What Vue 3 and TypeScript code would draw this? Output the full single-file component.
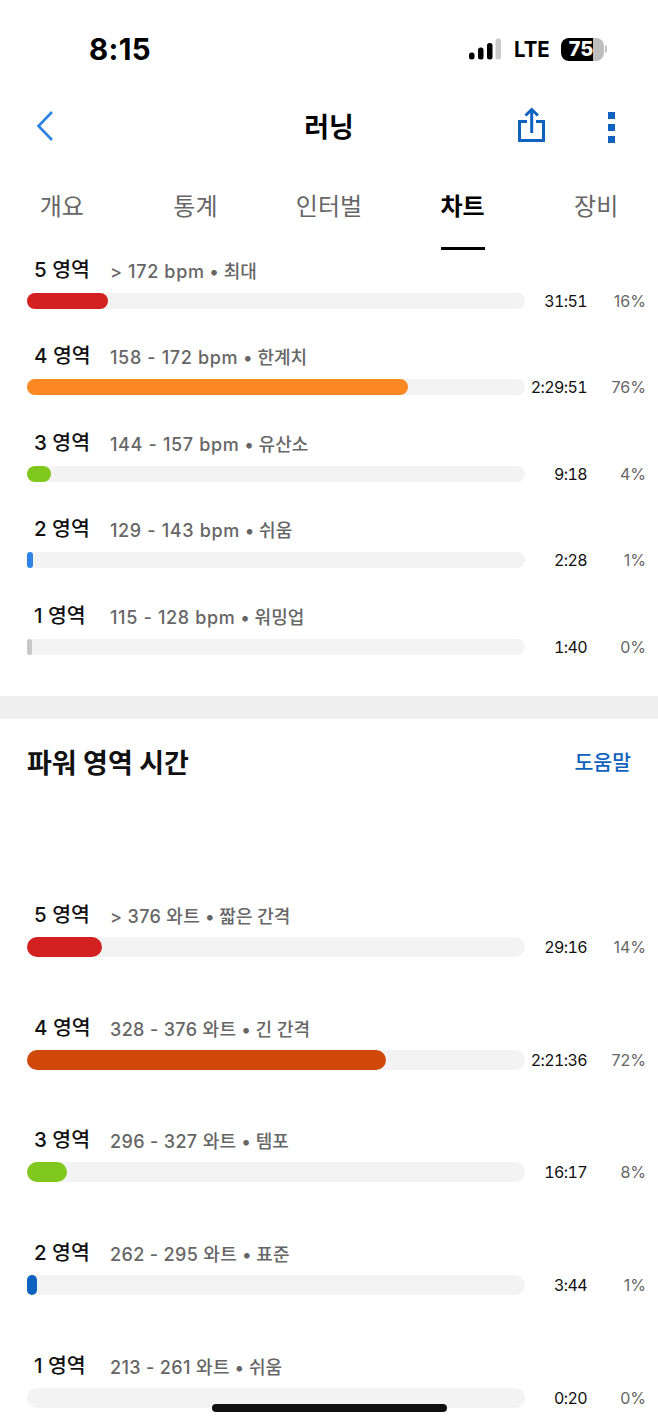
<script setup lang="ts">
interface Zone { n: number; range: string; name: string; time: string; pct: string; color: string; width: number }
const tabs: string[] = ['개요', '통계', '인터벌', '차트', '장비']
const hr: Zone[] = [
  { n: 5, range: '> 172 bpm', name: '최대', time: '31:51', pct: '16%', color: '#d32020', width: 81 },
  { n: 4, range: '158 - 172 bpm', name: '한계치', time: '2:29:51', pct: '76%', color: '#fb8823', width: 381 },
  { n: 3, range: '144 - 157 bpm', name: '유산소', time: '9:18', pct: '4%', color: '#80c81e', width: 24 },
  { n: 2, range: '129 - 143 bpm', name: '쉬움', time: '2:28', pct: '1%', color: '#2f82e8', width: 6 },
  { n: 1, range: '115 - 128 bpm', name: '워밍업', time: '1:40', pct: '0%', color: '#c8c8c8', width: 5 },
]
const power: Zone[] = [
  { n: 5, range: '> 376 와트', name: '짧은 간격', time: '29:16', pct: '14%', color: '#d32020', width: 75 },
  { n: 4, range: '328 - 376 와트', name: '긴 간격', time: '2:21:36', pct: '72%', color: '#d0480a', width: 359 },
  { n: 3, range: '296 - 327 와트', name: '템포', time: '16:17', pct: '8%', color: '#80c81e', width: 40 },
  { n: 2, range: '262 - 295 와트', name: '표준', time: '3:44', pct: '1%', color: '#0f62c0', width: 10 },
  { n: 1, range: '213 - 261 와트', name: '쉬움', time: '0:20', pct: '0%', color: '#f3f3f3', width: 0 },
]
</script>

<template>
  <div class="page">
    <div class="status">
      <span class="clock">8:15</span>
      <div class="status-right">
        <svg width="32" height="22" viewBox="0 0 32 22">
          <rect x="0" y="14.5" width="5.5" height="7" rx="2.5" fill="#000" />
          <rect x="9" y="9.5" width="5.5" height="12" rx="2.5" fill="#000" />
          <rect x="18" y="5" width="5.5" height="16.5" rx="2.5" fill="#000" />
          <rect x="26.5" y="0.5" width="5.5" height="21" rx="2.5" fill="#ccc" />
        </svg>
        <span class="lte">LTE</span>
        <div class="battery"><span class="batt-num">75</span></div>
        <span class="batt-tip"></span>
      </div>
    </div>

    <div class="nav">
      <svg class="back" width="20" height="32" viewBox="0 0 20 32">
        <path d="M17 2 L3.5 16 L17 30" fill="none" stroke="#2a82e4" stroke-width="2.6" />
      </svg>
      <span class="title">러닝</span>
      <div class="nav-actions">
        <svg width="28" height="36" viewBox="0 0 28 36">
          <path d="M9 15.5 H1.5 V34.5 H25.5 V15.5 H18" fill="none" stroke="#0f62c0" stroke-width="3" />
          <path d="M13.7 27 V4" fill="none" stroke="#0f62c0" stroke-width="3" />
          <path d="M7.5 9.5 L13.7 3.5 L19.9 9.5" fill="none" stroke="#0f62c0" stroke-width="3" />
        </svg>
        <div class="dots"><i></i><i></i><i></i></div>
      </div>
    </div>

    <div class="tabs">
      <div v-for="t in tabs" :key="t" class="tab" :class="{ active: t === '차트' }">
        <span class="tab-label">{{ t }}</span>
      </div>
    </div>

    <section class="zones hr">
      <div v-for="z in hr" :key="z.n" class="zone">
        <div class="zone-head">
          <span class="zone-name">{{ z.n }} 영역</span>
          <span class="zone-sub"><span class="range">{{ z.range }}</span> • {{ z.name }}</span>
        </div>
        <div class="zone-bar">
          <div class="track"><div class="fill" :style="{ width: z.width + 'px', background: z.color }"></div></div>
          <span class="time">{{ z.time }}</span>
          <span class="pct">{{ z.pct }}</span>
        </div>
      </div>
    </section>

    <div class="band"></div>

    <div class="section-head">
      <h2>파워 영역 시간</h2>
      <span class="help">도움말</span>
    </div>

    <section class="zones power">
      <div v-for="z in power" :key="z.n" class="zone">
        <div class="zone-head">
          <span class="zone-name">{{ z.n }} 영역</span>
          <span class="zone-sub"><span class="range">{{ z.range }}</span> • {{ z.name }}</span>
        </div>
        <div class="zone-bar">
          <div class="track"><div class="fill" :style="{ width: z.width + 'px', background: z.color }"></div></div>
          <span class="time">{{ z.time }}</span>
          <span class="pct">{{ z.pct }}</span>
        </div>
      </div>
    </section>

    <div class="home"></div>
  </div>
</template>

<style>
html, body { margin: 0; background: #fff; }
</style>

<style scoped>
.page {
  position: relative;
  width: 658px;
  height: 1426px;
  overflow: hidden;
  background: #fff;
  font-family: Inter, "Noto Sans CJK KR", "Liberation Sans", sans-serif;
  color: #000;
}
.status {
  height: 98px;
  box-sizing: border-box;
  padding: 29px 51px 0 89px;
  display: flex;
  justify-content: space-between;
  align-items: flex-start;
}
.clock { font-size: 29.5px; line-height: 40px; font-weight: 700; letter-spacing: 0.3px; }
.status-right { display: flex; align-items: center; height: 40px; }
.lte { font-size: 22px; font-weight: 700; margin-left: 13px; display: inline-block; width: 35px; white-space: nowrap; transform: scaleX(0.93); transform-origin: left; }
.battery {
  margin-left: 12px;
  width: 43px;
  height: 23px;
  border-radius: 8px;
  background: linear-gradient(90deg, #000 0 75%, #bdbdbd 75% 100%);
  display: flex;
  align-items: center;
  justify-content: center;
}
.batt-num { color: #fff; font-size: 20px; font-weight: 800; line-height: 23px; margin-left: -3px; }
.batt-tip { width: 2px; height: 8px; margin-left: 1px; background: #c4c4c4; border-radius: 0 2px 2px 0; }

.nav {
  height: 56px;
  position: relative;
  display: flex;
  align-items: center;
  justify-content: center;
}
.back { position: absolute; left: 35px; top: 12px; }
.title { font-size: 27px; font-weight: 600; line-height: 56px; padding-top: 3px; }
.nav-actions { position: absolute; left: 518px; top: 8px; display: flex; align-items: flex-start; }
.dots { margin-left: 62px; padding-top: 6px; display: flex; flex-direction: column; gap: 5px; }
.dots i { display: block; width: 7px; height: 7px; background: #0f62c0; }

.tabs {
  display: grid;
  grid-template-columns: repeat(5, 1fr);
  margin: 0 -5px;
  height: 96px;
  box-sizing: border-box;
  padding-top: 31px;
}
.tab { display: flex; justify-content: center; }
.tab-label {
  font-size: 24px;
  line-height: 44px;
  height: 62px;
  color: #666;
  font-weight: 400;
  box-sizing: content-box;
}
.tab.active .tab-label {
  color: #000;
  font-weight: 700;
  border-bottom: 3px solid #000;
}

.zones { display: flex; flex-direction: column; }
.hr { height: 446px; }
.zone-head { display: flex; align-items: center; padding-left: 34px; box-sizing: border-box; }
.zone-name { width: 76px; font-size: 20.5px; font-weight: 500; color: #111; white-space: nowrap; padding-bottom: 4px; }
.zone-sub { font-size: 18px; font-weight: 500; color: #666; white-space: nowrap; }
.hr .range { letter-spacing: 0.65px; }
.power .range { letter-spacing: 0.35px; }
.zone-bar { display: flex; align-items: center; padding-left: 27px; }
.track { width: 498px; background: #f3f3f3; }
.fill { height: 100%; }
.time { width: 62px; text-align: right; font-size: 16px; line-height: 20px; color: #111; white-space: nowrap; font-variant-numeric: tabular-nums; letter-spacing: -0.6px; }
.pct { width: 59px; text-align: right; font-size: 16px; line-height: 20px; color: #666; white-space: nowrap; }

.hr .zone { height: 86.4px; flex: none; }
.hr .zone-head { height: 43px; padding-bottom: 3px; }
.hr .zone-bar { height: 16px; }
.hr .track { height: 16px; border-radius: 8px; }
.hr .fill { border-radius: 8px; }

.band { height: 23px; background: #efefef; }
.section-head {
  height: 88px;
  box-sizing: border-box;
  padding: 0 27px 4px;
  display: flex;
  align-items: center;
  justify-content: space-between;
}
.section-head h2 { margin: 0; font-size: 27px; font-weight: 700; color: #111; }
.help { font-size: 20.5px; font-weight: 500; color: #0f62c0; }

.power { margin-top: 86px; }
.power .zone { height: 112.7px; flex: none; }
.power .zone-head { height: 44px; }
.power .zone-bar { height: 20px; }
.power .track { height: 20px; border-radius: 10px; }
.power .fill { border-radius: 10px; }

.home {
  position: absolute;
  left: 212px;
  top: 1404px;
  width: 235px;
  height: 8px;
  border-radius: 4px;
  background: #111;
}
</style>
